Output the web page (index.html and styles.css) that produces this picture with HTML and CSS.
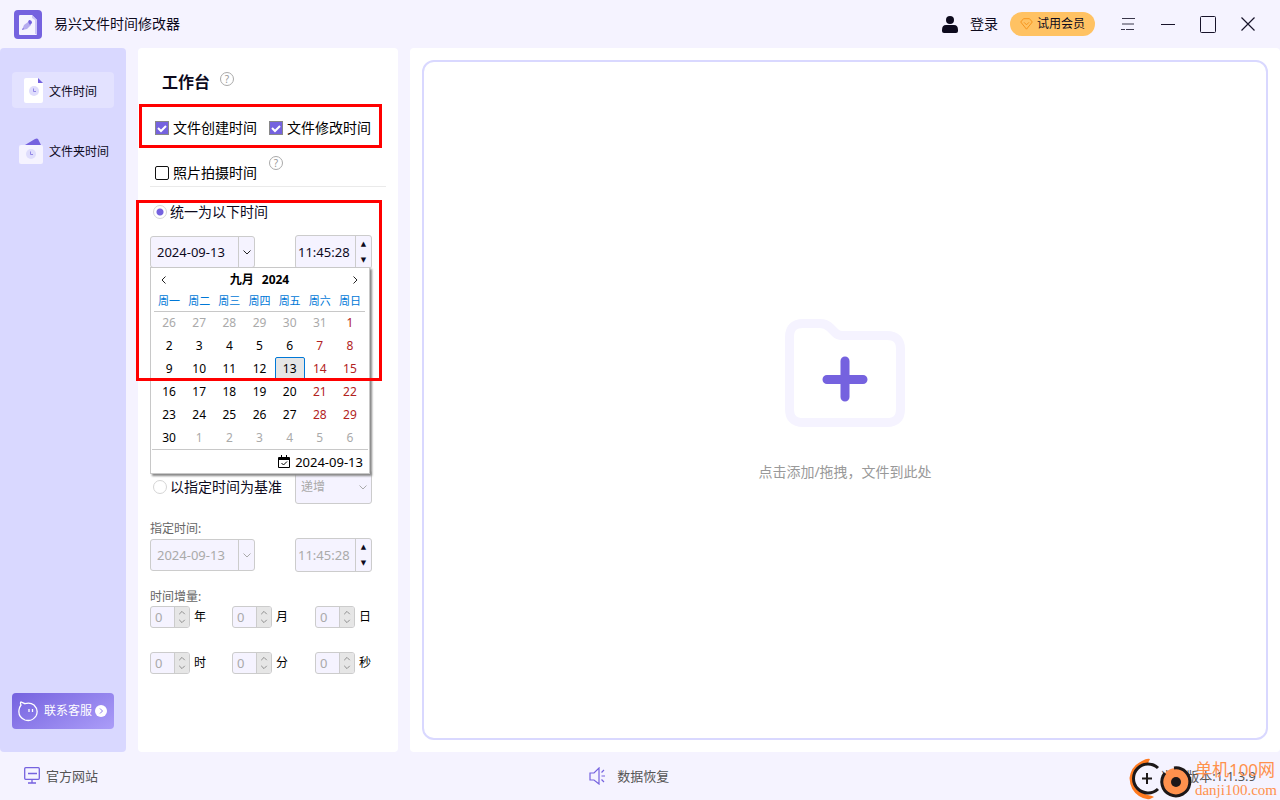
FILE: index.html
```html
<!DOCTYPE html>
<html lang="zh-CN">
<head>
<meta charset="utf-8">
<title>易兴文件时间修改器</title>
<link rel="stylesheet" href="styles.css">
</head>
<body>
<div class="app">
  <header class="topbar">
    <svg class="logo" width="28" height="29" viewBox="0 0 28 29"><rect width="28" height="29" rx="4" fill="#7562df"/><path d="M6 5h12l5 5v14a1 1 0 0 1-1 1H6a1 1 0 0 1-1-1V6a1 1 0 0 1 1-1z" fill="#f5f3ff"/><path d="M18 5l5 5v14h-2V10l-3-2z" fill="#ccc5f6"/><path d="M8 20l2-5 4-3 3 3-4 4z" fill="#b6acef"/><path d="M8 20l1-2 1 1zM14 12l1-2q3 0 3 3l-2 2z" fill="#7562df"/></svg>
    <h1 class="app-name">易兴文件时间修改器</h1>
    <button class="login"><svg width="16" height="17" viewBox="0 0 16 17"><circle cx="8" cy="4" r="4" fill="#0d0a1d"/><path d="M0 14q0-5 4-5h8q4 0 4 5v1q0 2-2 2H2q-2 0-2-2z" fill="#0d0a1d"/></svg><span>登录</span></button>
    <button class="vip"><svg width="13" height="12" viewBox="0 0 13 12" fill="none" stroke="#f5941d"><path d="M3.5.7h6L12.300 4 6.500 11.200.7 4z"/><path d="M4 4.300l2.500 2.500L9 4.300"/></svg><span>试用会员</span></button>
    <div class="window-tools">
      <button aria-label="菜单"><svg width="14" height="14" viewBox="0 0 14 14" stroke="#39364a" stroke-width="1.200"><path d="M1 1.500h13M1 7h12M0 12.500h4M5 12.500h8"/></svg></button>
      <button aria-label="最小化"><svg width="14" height="14" viewBox="0 0 14 14" stroke="#17132a"><path d="M0 7.500h14"/></svg></button>
      <button aria-label="最大化"><svg width="16" height="17" viewBox="0 0 16 17" fill="none" stroke="#17132a"><rect x=".5" y=".5" width="15" height="16" rx="1"/></svg></button>
      <button aria-label="关闭"><svg width="14" height="14" viewBox="0 0 14 14" stroke="#17132a" stroke-width="1.200"><path d="M.5.5l13 13M13.500.5l-13 13"/></svg></button>
    </div>
  </header>

  <main class="content">
    <nav class="sidebar">
      <button class="nav-item active"><svg width="25" height="25" viewBox="0 0 25 25"><path d="M4 0h12v4q0 1 1 1h4v18a2 2 0 0 1-2 2H4a2 2 0 0 1-2-2V2a2 2 0 0 1 2-2z" fill="#fff"/><path d="M16 0l5 5h-5z" fill="#7562df"/><circle cx="12" cy="13" r="5" fill="#dfddfc"/><path d="M11.500 10.500v3H14" fill="none" stroke="#9287e6"/></svg><span>文件时间</span></button>
      <button class="nav-item"><svg width="25" height="26" viewBox="0 0 25 26"><path d="M6 7L16 1q2-1 3 0l3 6z" fill="#7562df"/><rect y="7" width="24" height="19" rx="2" fill="#f5f3ff"/><circle cx="12" cy="16" r="5" fill="#dfddfc"/><path d="M11.500 13.500v3H14" fill="none" stroke="#9287e6"/></svg><span>文件夹时间</span></button>
      <button class="service"><svg width="20" height="21" viewBox="0 0 20 21" fill="none" stroke="#fff" stroke-width="1.300"><path d="M3 4Q2 2 3 1l4 1.700Q12 1 16 4q5 5 2 11-4 6-11 4-7-3-6-10 .5-3 2-5zM11 8v3M14.500 8v3"/></svg><span>联系客服</span><svg width="12" height="12" viewBox="0 0 12 12"><circle cx="6" cy="6" r="6" fill="#fff"/><path d="M5 3.500L7.500 6 5 8.500" fill="none" stroke="#8d7ce8"/></svg></button>
    </nav>

    <section class="workbench">
      <div class="title-row"><h2>工作台</h2><button class="help" aria-label="帮助">?</button></div>
      <div class="check-row">
        <label class="check"><input type="checkbox" checked>文件创建时间</label>
        <label class="check"><input type="checkbox" checked>文件修改时间</label>
      </div>
      <div class="check-row photo">
        <label class="check"><input type="checkbox">照片拍摄时间</label>
        <button class="help" aria-label="照片帮助">?</button>
      </div>
      <label class="radio"><input type="radio" name="mode" checked>统一为以下时间</label>
      <div class="fields">
        <div class="date-box">
          <div class="combo"><input type="text" value="2024-09-13" aria-label="日期"><button aria-label="打开日历"><svg width="8" height="5" viewBox="0 0 8 5"><path d="M.5.5L4 4 7.500.5"/></svg></button></div>
          <div class="calendar">
            <div class="cal-head"><button aria-label="上个月"><svg width="5" height="8" viewBox="0 0 5 8"><path d="M4.500.5L1 4l3.500 3.500"/></svg></button><strong><span>九月</span><span>2024</span></strong><button aria-label="下个月"><svg width="5" height="8" viewBox="0 0 5 8"><path d="M.5.5L4 4 .5 7.500"/></svg></button></div>
            <table>
              <thead><tr><th>周一</th><th>周二</th><th>周三</th><th>周四</th><th>周五</th><th>周六</th><th>周日</th></tr></thead>
              <tbody>
                <tr><td class="out">26</td><td class="out">27</td><td class="out">28</td><td class="out">29</td><td class="out">30</td><td class="out">31</td><td class="rest">1</td></tr>
                <tr><td>2</td><td>3</td><td>4</td><td>5</td><td>6</td><td class="rest">7</td><td class="rest">8</td></tr>
                <tr><td>9</td><td>10</td><td>11</td><td>12</td><td><span class="today">13</span></td><td class="rest">14</td><td class="rest">15</td></tr>
                <tr><td>16</td><td>17</td><td>18</td><td>19</td><td>20</td><td class="rest">21</td><td class="rest">22</td></tr>
                <tr><td>23</td><td>24</td><td>25</td><td>26</td><td>27</td><td class="rest">28</td><td class="rest">29</td></tr>
                <tr><td>30</td><td class="out">1</td><td class="out">2</td><td class="out">3</td><td class="out">4</td><td class="out">5</td><td class="out">6</td></tr>
              </tbody>
            </table>
            <button class="cal-today"><svg width="12" height="13" viewBox="0 0 12 13" fill="none" stroke="#000"><path d="M.5 2.500h11v10H.5zM.5 4.500h11M.5 3.500h11M3.500 0v3M8.500 0v3M3.500 8l2 2L9 6.500"/></svg><span>2024-09-13</span></button>
          </div>
        </div>
        <div class="time-box"><input type="text" value="11:45:28" aria-label="时间"><div class="steps"><button>▲</button><button>▼</button></div></div>
      </div>

      <div class="fields base-row">
        <label class="radio"><input type="radio" name="mode">以指定时间为基准</label>
        <div class="select-box"><select disabled aria-label="方式"><option>递增</option></select><svg width="8" height="5" viewBox="0 0 8 5"><path d="M.5.5L4 4 7.500.5"/></svg></div>
      </div>
      <label class="caption" for="base-date">指定时间:</label>
      <div class="fields">
        <div class="combo off"><input id="base-date" type="text" value="2024-09-13" disabled><button disabled aria-label="打开日历"><svg width="8" height="5" viewBox="0 0 8 5"><path d="M.5.5L4 4 7.500.5"/></svg></button></div>
        <div class="time-box off"><input type="text" value="11:45:28" disabled aria-label="指定时刻"><div class="steps"><button>▲</button><button>▼</button></div></div>
      </div>
      <p class="caption step-caption">时间增量:</p>
      <div class="amounts">
        <label class="amount"><span class="spin"><input type="text" value="0" disabled><svg width="15" height="20" viewBox="0 0 15 20"><path d="M4.500 7l3-3 3 3M4.500 13l3 3 3-3"/></svg></span>年</label>
        <label class="amount"><span class="spin"><input type="text" value="0" disabled><svg width="15" height="20" viewBox="0 0 15 20"><path d="M4.500 7l3-3 3 3M4.500 13l3 3 3-3"/></svg></span>月</label>
        <label class="amount"><span class="spin"><input type="text" value="0" disabled><svg width="15" height="20" viewBox="0 0 15 20"><path d="M4.500 7l3-3 3 3M4.500 13l3 3 3-3"/></svg></span>日</label>
        <label class="amount"><span class="spin"><input type="text" value="0" disabled><svg width="15" height="20" viewBox="0 0 15 20"><path d="M4.500 7l3-3 3 3M4.500 13l3 3 3-3"/></svg></span>时</label>
        <label class="amount"><span class="spin"><input type="text" value="0" disabled><svg width="15" height="20" viewBox="0 0 15 20"><path d="M4.500 7l3-3 3 3M4.500 13l3 3 3-3"/></svg></span>分</label>
        <label class="amount"><span class="spin"><input type="text" value="0" disabled><svg width="15" height="20" viewBox="0 0 15 20"><path d="M4.500 7l3-3 3 3M4.500 13l3 3 3-3"/></svg></span>秒</label>
      </div>
      <div class="mark mark-types"></div>
      <div class="mark mark-date"></div>
    </section>

    <section class="files">
      <button class="drop">
        <svg width="120" height="109" viewBox="0 0 120 109" fill="none"><path d="M4.500 18Q4.500 4.500 18 4.500h17q6 0 10 4l5 5q3 3 7 3h45q13.500 0 13.500 13.500v60q0 13.500-13.500 13.500H18Q4.500 103.500 4.500 90z" stroke="#f5f3ff" stroke-width="9"/><path d="M60 42v36M42 60.500h36" stroke="#7562df" stroke-width="9" stroke-linecap="round"/></svg>
        <span>点击添加/拖拽，文件到此处</span>
      </button>
    </section>
  </main>

  <footer class="bottombar">
    <a href="#site"><svg width="16" height="17" viewBox="0 0 16 17" fill="none" stroke="#7562df" stroke-width="1.300"><rect x=".7" y=".7" width="14.600" height="11.600" rx="1"/><path d="M4 6.500h9M8 12v4M4 16h8"/></svg><span>官方网站</span></a>
    <a href="#recovery" class="recovery"><svg width="17" height="18" viewBox="0 0 17 18" fill="none" stroke="#7562df" stroke-width="1.200"><path d="M10 1v16l-5-4H1V6h4zM12.500 9H16M12.500 5.500L15 3M12.500 12.500L15 15"/></svg><span>数据恢复</span></a>
    <span class="version">当前版本:1.1.3.9</span>
    <div class="stamp">
      <svg width="64" height="42" viewBox="0 0 64 42" fill="none"><path d="M21 1q-3-1-8 2Q2 8 .5 20 1 32 10 38q6 4 11 3l4-2-2-1Q6 35 5 20 6 8 19 5z" fill="#ff7a1f"/><path d="M29 10a14.500 14.500 0 1 0 0 21" stroke="#1d1819" stroke-width="3"/><path d="M18 15v11M13 20.500h10" stroke="#1d1819" stroke-width="2"/><circle cx="47" cy="24" r="14" fill="#ff914d"/><path d="M45 10a14 14 0 1 1-9 5" stroke="#1d1819" stroke-width="3"/><circle cx="47" cy="24" r="5" fill="#1d1819"/></svg>
      <div class="stamp-text"><span class="stamp-name">单机100网</span><span class="stamp-url">danji100.com</span></div>
    </div>
  </footer>
</div>
</body>
</html>
```
FILE: styles.css
```css
* { box-sizing: border-box; }
body {
  margin: 0;
  font: 14px/20px "Noto Sans", "Noto Sans CJK SC", sans-serif;
  color: #0d0a1d;
  background: #f5f3ff;
}
button, input, select { font: inherit; color: inherit; }
button { padding: 0; border: 0; background: none; }
input { min-width: 0; }
h1, h2, p { margin: 0; }
svg { flex: none; }

.app { display: flex; flex-direction: column; min-height: 100vh; }

.topbar { display: flex; align-items: center; height: 48px; padding: 0 25px 0 14px; }
.app-name { margin-left: 12px; font-size: 14px; font-weight: 400; flex: 1; }
.login { display: flex; align-items: center; gap: 12px; }
.vip {
  display: flex; align-items: center; gap: 4px;
  height: 24px; margin: 0 26px 0 12px; padding: 0 10px;
  border-radius: 12px; background: #ffc263; font-size: 12px;
}
.window-tools { display: flex; gap: 26px; }
.window-tools button { display: flex; align-items: center; justify-content: center; width: 14px; height: 24px; }

.content { display: flex; gap: 12px; flex: 1; }

.sidebar {
  display: flex; flex-direction: column; gap: 24px;
  width: 126px; padding: 24px 12px 23px;
  border-radius: 4px; background: #d9d8ff;
}
.nav-item {
  display: flex; align-items: center; gap: 5px;
  height: 36px; padding: 1px 0 0 7px;
  border-radius: 4px; font-size: 12px;
}
.nav-item span { padding-top: 2px; }
.nav-item.active { padding-left: 10px; gap: 2px; background: #e3e2ff; }
.service {
  display: flex; align-items: center; gap: 3px;
  height: 36px; margin-top: auto; padding-left: 6px;
  border-radius: 4px; color: #fff; font-size: 12px;
  background: linear-gradient(150deg, #7562df, #ab9df8);
}
.service span { margin-left: 3px; }

.workbench { position: relative; width: 260px; padding: 22px 12px; border-radius: 4px; background: #fff; }
.title-row { display: flex; gap: 10px; height: 24px; padding-left: 12px; }
h2 { font-size: 16px; line-height: 24px; font-weight: 700; }
.help {
  width: 14px; height: 14px; margin-top: 2px;
  border: 1px solid #aaa; border-radius: 50%;
  color: #999; font-size: 10px; line-height: 12px;
}
.check-row { display: flex; gap: 12px; height: 24px; margin-top: 22px; padding-left: 5px; color: #000; }
.check { display: flex; align-items: center; gap: 4px; white-space: nowrap; }
.check input {
  appearance: none; width: 14px; height: 14px; margin: 0;
  border: 1px solid #111; border-radius: 2px; background: #fff;
}
.check input:checked {
  border-color: #888; border-radius: 0;
  background: #7562df url("data:image/svg+xml,%3Csvg xmlns='http://www.w3.org/2000/svg' viewBox='0 0 12 12'%3E%3Cpath d='M2 6l3 3L10 4' fill='none' stroke='white' stroke-width='2'/%3E%3C/svg%3E");
}
.photo { height: 26px; margin-top: 21px; border-bottom: 1px solid #eaeaea; }
.photo .check { height: 24px; }
.photo .help { margin-top: -5px; }
.radio { display: flex; align-items: center; gap: 3px; height: 24px; margin-top: 13px; padding-left: 3px; white-space: nowrap; }
.radio input {
  appearance: none; width: 14px; height: 14px; margin: 0;
  border: 1px solid #d5d5d5; border-radius: 50%; background: #fff;
}
.radio input:checked { background: radial-gradient(circle, #7562df 3px, #fff 4px); }

.fields { display: flex; align-items: center; justify-content: space-between; height: 34px; padding-right: 14px; }
.radio + .fields { margin-top: 11px; }
.date-box { position: relative; }
.combo, .time-box, .select-box {
  display: flex; overflow: hidden;
  border: 1px solid #ccc; border-radius: 3px;
  background: #f5f3ff; font-size: 13px;
}
.combo { width: 105px; height: 32px; }
.combo input { flex: 1; padding: 0 0 0 6px; border: 0; background: none; }
.combo button { width: 16px; border-left: 1px solid #ccc; }
.combo svg, .select-box svg, .cal-head svg, .spin svg { fill: none; stroke: #222; }
.combo svg { display: block; margin: auto; }
.time-box { width: 77px; height: 34px; }
.time-box input { flex: 1; padding: 0 0 0 2px; border: 0; background: none; }
.steps { display: flex; flex-direction: column; width: 16px; border-left: 1px solid #ccc; }
.steps button { flex: 1; font: 7px/16px "DejaVu Sans", sans-serif; }
.off { color: #aaa; }
.off input, .spin input { color: #aaa; }
.off .steps { color: #0d0a1d; }
.off svg, .select-box svg { stroke: #aaa; }

.calendar {
  position: absolute; z-index: 2; top: 31px; left: 0; width: 220px;
  border: 1px solid #c8c8c8; background: #fff; color: #000;
  box-shadow: 2px 2px 2px #888; font-size: 12px;
}
.cal-head { display: flex; align-items: center; justify-content: space-between; height: 23px; padding: 0 11px 0 10px; }
.cal-head button { display: flex; }
.cal-head strong { display: flex; gap: 8px; }
table { width: 211px; margin: 0 3px; border-collapse: collapse; table-layout: fixed; }
th { height: 20px; padding: 0; border-bottom: 1px solid #c8c8c8; color: #0078d7; font-weight: 400; font-size: 11px; line-height: 18px; }
td { height: 23px; padding: 0; text-align: center; line-height: 21px; }
.out { color: #aaa; }
.rest { color: #b22222; }
.today { display: block; border: 1px solid #0078d7; border-radius: 2px; background: #e5e5e5; }
.cal-today {
  display: flex; align-items: center; justify-content: flex-end; gap: 5px;
  width: 216px; height: 24px; margin: 0 1px; padding-right: 5px;
  border-top: 1px solid #c8c8c8; font-size: 13px;
}

.base-row { margin-top: 201px; }
.base-row .radio { margin: 0; }
.select-box { position: relative; width: 77px; height: 34px; }
select { width: 100%; padding: 0 0 0 5px; appearance: none; border: 0; background: none; font-size: 12px; }
select:disabled { color: #aaa; opacity: 1; }
.select-box svg { position: absolute; right: 4px; top: 14px; pointer-events: none; }
.caption { display: block; height: 19px; margin-top: 15px; color: #666; font-size: 12px; }
.amounts { display: grid; grid-template-columns: 82px 83px 1fr; row-gap: 24px; color: #000; font-size: 12px; }
.amount { display: flex; align-items: center; gap: 4px; height: 22px; }
.spin { display: flex; width: 40px; height: 22px; border: 1px solid #ccc; border-radius: 3px; overflow: hidden; background: #f5f3ff; }
.spin input { flex: 1; padding: 0 0 0 4px; border: 0; background: none; font-size: 13px; }
.spin svg { border-left: 1px solid #ccc; background: #e6e6e6; stroke: #888; }

.mark { position: absolute; z-index: 3; border: 3px solid #f00; pointer-events: none; }
.mark-types { top: 56px; left: 1px; width: 243px; height: 44px; }
.mark-date { top: 152px; left: -2px; width: 246px; height: 181px; }

.files { display: flex; flex: 1; padding: 12px; border-radius: 4px; background: #fff; }
.drop {
  display: flex; flex-direction: column; align-items: center; justify-content: center; gap: 34px;
  flex: 1;
  border: 2px solid #d9d8ff; border-radius: 12px; color: #999;
}

.bottombar { position: relative; display: flex; align-items: center; justify-content: space-between; height: 48px; padding: 0 24px 1px; font-size: 13px; color: #555; }
.bottombar a { display: flex; align-items: center; gap: 6px; color: inherit; text-decoration: none; }
.bottombar .recovery { gap: 11px; }
.stamp { position: absolute; right: 3px; bottom: 0; display: flex; gap: 2px; color: #ff914d; white-space: nowrap; }
.stamp-text { display: flex; flex-direction: column; }
.stamp-name { font-size: 17px; line-height: 24px; }
.stamp-url { font: 15px/16px "Liberation Serif", serif; }
```
